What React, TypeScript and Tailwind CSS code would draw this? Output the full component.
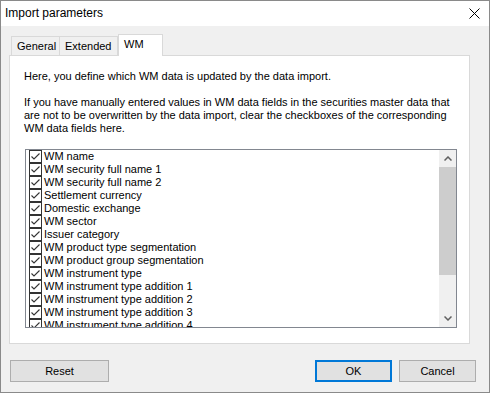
import React from "react";

const items = [
  "WM name",
  "WM security full name 1",
  "WM security full name 2",
  "Settlement currency",
  "Domestic exchange",
  "WM sector",
  "Issuer category",
  "WM product type segmentation",
  "WM product group segmentation",
  "WM instrument type",
  "WM instrument type addition 1",
  "WM instrument type addition 2",
  "WM instrument type addition 3",
  "WM instrument type addition 4",
];

function CheckBox() {
  return (
    <svg width="13" height="13" viewBox="0 0 13 13" className="shrink-0">
      <rect x="0.5" y="0.5" width="12" height="12" fill="#fff" stroke="#333" />
      <path d="M2.5 6.5 L5 9 L10.5 3.5" fill="none" stroke="#333" strokeWidth="1.1" />
    </svg>
  );
}

export default function App() {
  return (
    <div
      className="w-[490px] h-[393px] border border-[#8a8a8a] bg-[#f0f0f0] flex flex-col text-[11px] leading-[13px] text-black overflow-hidden"
      style={{ fontFamily: '"Liberation Sans", Arial, sans-serif' }}
    >
      <div className="h-[25px] bg-white flex items-center justify-between pl-[4px] pr-[9px] shrink-0">
        <span className="text-[12px]">Import parameters</span>
        <svg width="11" height="11" viewBox="0 0 11 11">
          <path d="M0.5 0.5 L10.5 10.5 M10.5 0.5 L0.5 10.5" stroke="#000" strokeWidth="1" />
        </svg>
      </div>

      <div className="mt-[8px] ml-[8px] flex flex-col w-[461px]">
        <div className="flex items-end h-[21px] pl-[2px]">
          <div className="h-[19px] w-[49px] border border-b-0 border-[#d9d9d9] bg-[#f0f0f0] flex items-center pl-[5px]">
            General
          </div>
          <div className="h-[19px] w-[58px] border border-b-0 border-l-0 border-[#d9d9d9] bg-[#f0f0f0] flex items-center pl-[5px]">
            Extended
          </div>
          <div className="relative z-10 h-[22px] -mb-px w-[45px] border border-b-0 border-[#d9d9d9] bg-white flex items-start pt-[3px] pl-[5px]">
            WM
          </div>
        </div>
        <div className="h-[289px] border border-[#d9d9d9] bg-white flex flex-col pl-[14px] pt-[14px]">
          <p className="whitespace-nowrap">Here, you define which WM data is updated by the data import.</p>
          <p className="mt-[13px] whitespace-nowrap">
            If you have manually entered values in WM data fields in the securities master data that
            <br />
            are not to be overwritten by the data import, clear the checkboxes of the corresponding
            <br />
            WM data fields here.
          </p>
          <div className="mt-[14px] ml-px w-[432px] h-[179px] border border-[#828790] flex">
            <div className="flex-1 overflow-hidden pl-[3px]">
              {items.map((t) => (
                <div key={t} className="h-[13px] flex items-center">
                  <CheckBox />
                  <span className="ml-[2px] whitespace-nowrap">{t}</span>
                </div>
              ))}
            </div>
            <div className="w-[17px] bg-[#f0f0f0] flex flex-col">
              <div className="h-[17px] flex items-center justify-center">
                <svg width="8" height="5" viewBox="0 0 8 5">
                  <path d="M0.5 4.5 L4 1 L7.5 4.5" fill="none" stroke="#606060" strokeWidth="1.5" />
                </svg>
              </div>
              <div className="flex-1 flex flex-col">
                <div className="h-[108px] bg-[#cdcdcd]" />
              </div>
              <div className="h-[17px] flex items-center justify-center">
                <svg width="8" height="5" viewBox="0 0 8 5">
                  <path d="M0.5 0.5 L4 4 L7.5 0.5" fill="none" stroke="#606060" strokeWidth="1.5" />
                </svg>
              </div>
            </div>
          </div>
        </div>
      </div>

      <div className="mt-[16px] flex items-center pl-[9px] pr-[13px]">
        <button className="w-[99px] h-[22px] border border-[#adadad] bg-[#e1e1e1]">
          Reset
        </button>
        <div className="flex-1" />
        <button className="w-[77px] h-[22px] border-2 border-[#0078d7] bg-[#e1e1e1]">
          OK
        </button>
        <button className="ml-[7px] w-[77px] h-[22px] border border-[#adadad] bg-[#e1e1e1]">
          Cancel
        </button>
      </div>
    </div>
  );
}
